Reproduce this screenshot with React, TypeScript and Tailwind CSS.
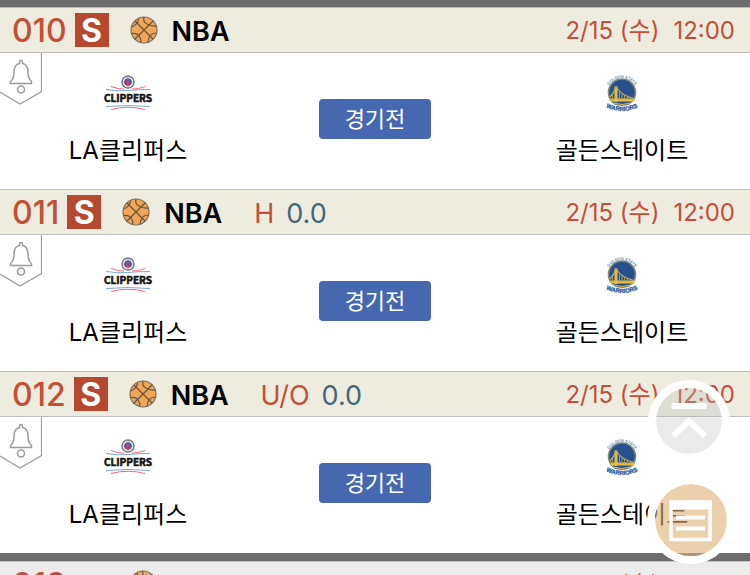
type Match = { no: string; kind?: string; line?: string };

const matches: Match[] = [
  { no: '010' },
  { no: '011', kind: 'H', line: '0.0' },
  { no: '012', kind: 'U/O', line: '0.0' },
];

function Basketball() {
  return (
    <svg viewBox="0 0 28 28" className="size-7 shrink-0" fill="none" stroke="#5f5648" strokeWidth="1.2" aria-hidden="true">
      <circle cx="14" cy="14" r="13" fill="#f3a555" stroke="#77716a" />
      <path d="M5 5 23 23M23.500 4.500 4.500 23.500" />
      <path d="M14 1C13 4 14.500 7 18 8.500S24 10.500 26.500 10" />
      <path d="M1.500 11C5.500 9.500 8 7.500 8.500 3" />
      <path d="M1.500 17.500C5 17 8 18 9.500 20.500S11 25 10.500 26.500" />
      <path d="M26.500 17C22 17 18.500 20 18 26.500" />
    </svg>
  );
}

function ClippersLogo() {
  return (
    <svg viewBox="0 0 48 36" className="h-9 w-12 overflow-visible" fill="none" role="img" aria-label="LA Clippers">
      <path d="M7 11.500Q15 14.500 20 14M28 14Q34 14.500 41 11.500M7 34.500Q24 30 41 34.500" stroke="#ed6b7b" />
      <path d="M2 14.500Q14 16.500 24 15.500T46 14.500M2 31.500Q24 29.500 46 31.500" stroke="#7fa6dc" />
      <circle cx="24" cy="7" r="6" fill="#f7f7f8" stroke="#74777c" strokeWidth="1.500" />
      <path d="M18 7h12M24 1v12" stroke="#9a9da3" />
      <circle cx="24" cy="7" r="3.800" fill="#315ca8" />
      <path d="M26 4.800h-3v4.400h3M23 7h3" stroke="#e3375c" strokeWidth="1.600" />
      <text x="24" y="27" textAnchor="middle" fill="#161616" stroke="#161616" strokeWidth="0.600" fontSize="10" fontWeight="700" fontFamily="Noto Sans CJK KR, sans-serif">CLIPPERS</text>
    </svg>
  );
}

function WarriorsLogo({ id }: { id: string }) {
  return (
    <svg viewBox="0 0 36 36" className="size-9 overflow-visible" fill="none" role="img" aria-label="Golden State Warriors">
      <path id={`${id}-top`} d="M3 18A15 15 0 0 1 33 18" />
      <path id={`${id}-bottom`} d="M0 31Q18 41 36 31" />
      <circle cx="18" cy="17.500" r="13.500" fill="#27508f" stroke="#7d8b78" strokeWidth="1.600" />
      <path d="M6 23.500H30.500V26.500H7.500ZM10.500 11.500h3V27h-3z" fill="#e9bb3c" />
      <path d="M6 22Q10 18 12 12Q18 21 30 23.500" stroke="#cdb04e" strokeWidth="1.200" />
      <path d="M8.500 20v5M15.500 17v7.500M18 19v6M20.500 20.500v4M23.500 22v3" stroke="#a39c60" />
      <path d="M9 28q9 3 18 0" stroke="#e9bb3c" />
      <path d="M3 29Q18 36 33 29" stroke="#fff" strokeWidth="3" />
      <text fill="#6d88ad" fontSize="4" fontWeight="700" fontFamily="Liberation Sans, sans-serif" textAnchor="middle">
        <textPath href={`#${id}-top`} startOffset="50%">GOLDEN STATE</textPath>
      </text>
      <text fill="#2c5a96" stroke="#2c5a96" strokeWidth="0.300" fontSize="6" fontWeight="700" fontFamily="Liberation Sans, sans-serif" textAnchor="middle">
        <textPath href={`#${id}-bottom`} startOffset="50%">WARRIORS</textPath>
      </text>
    </svg>
  );
}

function MatchHeader({ no, kind, line, closed }: Match & { closed?: boolean }) {
  return (
    <header className={`flex h-[46px] items-center justify-between border-y border-[#bfbfbf] pr-[15px] pl-3 ${closed ? 'bg-[#ececec]' : 'bg-[#eeecdf]'}`}>
      <div className="flex items-center">
        <span className="pt-0.5 text-[32px] leading-none font-medium text-[#c44f35]">{no}</span>
        {closed ? (
          <span className="ml-2 size-[34px]" />
        ) : (
          <span className="ml-2 flex size-[34px] items-center justify-center bg-[#b5482e] pt-0.5 text-[32px] leading-none font-bold text-white">S</span>
        )}
        <span className="ml-[21px] flex">
          <Basketball />
        </span>
        <span className="ml-3.5 pt-0.5 text-[27px] leading-none font-semibold text-black">NBA</span>
        {kind && (
          <span className="ml-8 flex gap-3 pt-0.5 text-[27px] leading-none">
            <span className="text-[#c44f35]">{kind}</span>
            <span className="text-[#41677d]">{line}</span>
          </span>
        )}
      </div>
      <time className="flex gap-3.5 pt-0.5 text-2xl text-[#c44f35]">
        <span>2/15 (수)</span>
        <span>12:00</span>
      </time>
    </header>
  );
}

function AlarmButton() {
  return (
    <button type="button" aria-label="알림" className="absolute top-0 left-0">
      <svg viewBox="0 0 42 52" className="h-[52px] w-[42px]" fill="none" stroke="#9a9a9a">
        <path d="M41.500 0V38.500L20 51 0 39" strokeWidth="1.200" />
        <path d="M10.500 30.500V28.500C13.500 26 14 23 14 19.500C14 14 16.500 11 19.500 10.500V9a1.500 1.500 0 0 1 3 0v1.500C25.500 11 28 14 28 19.500C28 23 28.500 26 31.500 28.500V30.500Z" strokeWidth="1.500" />
        <circle cx="21" cy="36.500" r="3.500" strokeWidth="1.500" />
      </svg>
    </button>
  );
}

function MatchCard(match: Match) {
  return (
    <article>
      <MatchHeader {...match} />
      <div className="relative grid h-[136px] grid-cols-[1fr_238px_1fr] items-center bg-white pb-1 text-2xl text-black">
        <AlarmButton />
        <div className="flex flex-col items-center gap-6 pt-1">
          <ClippersLogo />
          <span>LA클리퍼스</span>
        </div>
        <button type="button" className="mx-auto h-10 w-28 rounded bg-[#4668b0] text-[22px] leading-none text-white">
          경기전
        </button>
        <div className="flex flex-col items-center gap-6 pt-1">
          <WarriorsLogo id={`gsw-${match.no}`} />
          <span>골든스테이트</span>
        </div>
      </div>
    </article>
  );
}

export default function App() {
  return (
    <main className="h-screen overflow-hidden bg-white font-['Inter','Noto_Sans_CJK_KR',sans-serif]">
      <div className="h-[7px] bg-[#6d6d6d]" />
      {matches.map((match) => (
        <MatchCard key={match.no} {...match} />
      ))}
      <div className="h-2 bg-[#6d6d6d]" />
      <MatchHeader no="013" closed />

      <button type="button" aria-label="맨 위로" className="fixed right-5 bottom-[113px] size-[82px] rounded-full border-8 border-white bg-[#b8b8b8]/30 bg-clip-padding">
        <svg viewBox="0 0 66 66" className="size-full" fill="none" stroke="#fff" strokeWidth="6">
          <path d="M15.500 18h35M17 48 33 33 49 48" />
        </svg>
      </button>
      <button type="button" aria-label="구매 목록" className="fixed right-[15px] bottom-[11px] size-[88px] rounded-full border-8 border-white bg-[#e0b175]/60 bg-clip-padding">
        <svg viewBox="0 0 72 72" className="size-full" fill="none" stroke="#fff">
          <path d="M14.500 21H56.500" strokeWidth="9" />
          <path d="M16 18H55V55.500H16Z" strokeWidth="3.500" />
          <path d="M21 33.500H50M21 44.500H50" strokeWidth="4" />
        </svg>
      </button>
    </main>
  );
}
